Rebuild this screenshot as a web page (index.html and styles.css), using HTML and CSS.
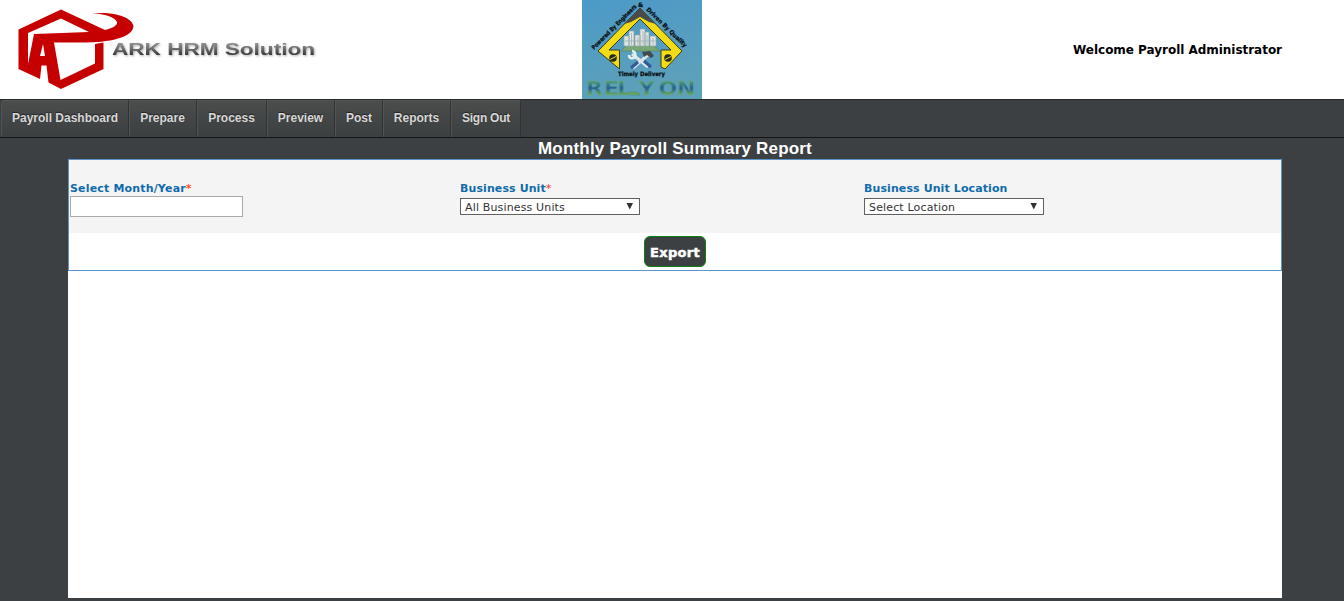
FILE: index.html
```html
<!DOCTYPE html>
<html lang="en">
<head>
<meta charset="utf-8">
<title>Monthly Payroll Summary Report</title>
<link rel="stylesheet" href="styles.css">
</head>
<body>
<header class="header">
  <svg class="brand" width="330" height="99" viewBox="0 0 330 99" role="img" aria-label="ARK HRM Solution">
    <defs>
      <linearGradient id="ink" gradientUnits="userSpaceOnUse" x1="0" y1="42" x2="0" y2="56">
        <stop offset="0" stop-color="#999"/><stop offset="0.45" stop-color="#707070"/><stop offset="1" stop-color="#303030"/>
      </linearGradient>
    </defs>
    <path fill="#c60000" fill-rule="evenodd" d="M18.500 29.500 61 9.500 105 30C113 28 118 25 117 22 115 17 105 14 92 13.500 113 11 132 17 133.500 26 133 36 115 42 87 42.500L54 42.500 60.500 80 95 63.500V44L103.500 42.500V69L61 89 48.500 82.500 46.500 65.500H41.500L40 79 18.500 69ZM28 33V64L34 34 89 32 61 18.500ZM43 44 40 56H45Z"/>
    <text class="brand-text" x="112" y="55" textLength="203" lengthAdjust="spacingAndGlyphs" fill="url(#ink)">ARK HRM Solution</text>
  </svg>
  <svg class="client" width="120" height="99" viewBox="0 0 120 99" role="img" aria-label="Relyon">
    <defs>
      <linearGradient id="sky" x1="0" y1="0" x2="0.3" y2="1">
        <stop offset="0" stop-color="#4c9ac8"/><stop offset="1" stop-color="#5da0b9"/>
      </linearGradient>
      <linearGradient id="word" gradientUnits="userSpaceOnUse" x1="0" y1="80" x2="0" y2="96">
        <stop offset="0" stop-color="#5aa667"/><stop offset="0.25" stop-color="#3d8681"/><stop offset="0.5" stop-color="#245e98"/><stop offset="0.7" stop-color="#43827f"/><stop offset="1" stop-color="#78b548"/>
      </linearGradient>
      <path id="arcLeft" d="M12 50 56 6"/>
      <path id="arcRight" d="M64 10 104 49"/>
    </defs>
    <rect width="120" height="99" fill="url(#sky)"/>
    <path d="M58 8 100 51 83 69 79 67V50H89L58 19 27 50H37.500V69L16 51Z" fill="#f3dc16" stroke="#363c20"/>
    <path d="M58 8 74 24 67 22 58 17 49 22 42 24Z" fill="#494c4a"/>
    <path d="M45 45H71L78 51H39Z" fill="#78a875" stroke="#59805f" stroke-width=".6"/>
    <path d="M42 36h5v10h-5zM47 31h5v15h-5zM53 35h5v11h-5zM58 29h5v17h-5zM63 32h4v14h-4zM68 36h6v10h-6z" fill="#dfe6e5" stroke="#91a3a5" stroke-width=".7"/>
    <path d="M49.500 33v12M56 37v8M61 31v14M65 35v10M71 38v7M43 41h30" stroke="#9cafb0" stroke-width=".8" fill="none"/>
    <path d="M50 54 66 67M67 54 51 68" stroke="#dce5ea" stroke-width="3" fill="none"/>
    <path d="M47 55C47 59 51 59 53 57 54 54 53 51 50 51" fill="none" stroke="#e6edef" stroke-width="2.500"/>
    <path d="M62 61 69 67M56 62 49 68" stroke="#315a99" stroke-width="3" fill="none"/>
    <path d="M60 52 68 51 72 56 69 58 65 55 62 57Z" fill="#43494d"/>
    <circle cx="31" cy="58" r="3.800" fill="#242a19"/><path d="M28 59.500 34 56.500" stroke="#d3bd36" stroke-width="1.200"/>
    <circle cx="86" cy="58" r="3.800" fill="#242a19"/><path d="M83 59.500 89 56.500" stroke="#d3bd36" stroke-width="1.200"/>
    <g class="motto">
      <text><textPath href="#arcLeft" textLength="61" lengthAdjust="spacingAndGlyphs">Powered By Engineers</textPath></text>
      <text x="56" y="6.500">&amp;</text>
      <text><textPath href="#arcRight" textLength="54" lengthAdjust="spacingAndGlyphs">Driven By Quality</textPath></text>
      <text x="36" y="76" textLength="47" lengthAdjust="spacingAndGlyphs">Timely Delivery</text>
    </g>
    <path d="M46 92H56L58 95H46Z" fill="#67a65a" stroke="#3f8277" stroke-width=".4"/>
    <text class="wordmark" transform="scale(1.1 1)" x="3.600 20 32 51.500 69.500 86.400" y="95" fill="url(#word)">RELYON</text>
  </svg>
  <div class="welcome">Welcome Payroll Administrator</div>
</header>
<nav class="menu">
  <a class="item dashboard">Payroll Dashboard</a>
  <a class="item prepare">Prepare</a>
  <a class="item process">Process</a>
  <a class="item preview">Preview</a>
  <a class="item post">Post</a>
  <a class="item reports">Reports</a>
  <a class="item signout">Sign Out</a>
</nav>
<main class="page">
  <h1 class="title">Monthly Payroll Summary Report</h1>
  <section class="sheet">
    <form class="panel">
      <div class="filters">
        <div class="field">
          <label class="label month">Select Month/Year<span class="star orange">*</span></label>
          <div class="input"></div>
        </div>
        <div class="field">
          <label class="label">Business Unit<span class="star">*</span></label>
          <div class="select">All Business Units<svg width="8" height="7" viewBox="0 0 8 7"><path d="M0.500 0H7L3.800 6.500Z"/></svg></div>
        </div>
        <div class="field">
          <label class="label">Business Unit Location</label>
          <div class="select">Select Location<svg width="8" height="7" viewBox="0 0 8 7"><path d="M0.500 0H7L3.800 6.500Z"/></svg></div>
        </div>
      </div>
      <div class="actions"><button class="export" type="button">Export</button></div>
    </form>
  </section>
</main>
</body>
</html>
```
FILE: styles.css
```css
* { box-sizing: border-box; }
body { margin: 0; height: 601px; overflow: hidden; background: #3c4042; font-family: "DejaVu Sans", sans-serif; }
.header { height: 99px; display: grid; grid-template-columns: 582px 120px 1fr; align-items: center; padding-right: 62px; background: #fff; }
.brand, .client { display: block; }
.brand-text { font: bold 16px "Liberation Sans", sans-serif; filter: drop-shadow(1px 1px 1px #aaa); }
.motto { font: bold 6px "DejaVu Sans", sans-serif; fill: #090e12; stroke: #090e12; stroke-width: .25px; }
.wordmark { font: bold 20px "DejaVu Sans", sans-serif; stroke: #62a58f; stroke-width: .5px; }
.welcome { justify-self: end; font-size: 12px; font-weight: bold; letter-spacing: -0.03px; color: #000; white-space: nowrap; }
.menu { height: 39px; display: flex; padding-left: 1px; border-top: 1px solid #272a2b; border-bottom: 1px solid #131516; background: #3c4042; }
.item { height: 37px; display: flex; align-items: center; justify-content: center; padding: 0 1px 2px 0; border-top: 1px solid #565857; border-left: 1px solid #515453; border-right: 1px solid #303334; background: linear-gradient(#4b4d4c, #3b3f41); color: #d8d8d8; font: bold 12px "Liberation Sans", sans-serif; text-shadow: 0 -1px 1px #222; }
.dashboard { width: 128px; padding-right: 0; border-radius: 4px 0 0 4px; }
.prepare, .preview, .reports { width: 68px; }
.process, .signout { width: 70px; }
.signout { padding-right: 0; letter-spacing: -0.25px; }
.post { width: 48px; padding-right: 0; }
.page { padding: 0 62px 0 68px; }
.title { height: 21px; margin: 0; padding-top: 1px; text-align: center; color: #fff; font: bold 17px/20px "Liberation Sans", sans-serif; letter-spacing: 0.19px; }
.sheet { height: 439px; background: #fff; }
.panel { height: 112px; border: 1px solid #5e95c8; }
.filters { height: 73px; display: grid; grid-template-columns: 390px 404px 1fr; padding: 21px 0 0 1px; background: #f4f4f4; }
.label { display: block; height: 15px; color: #116bab; font-size: 11px; font-weight: bold; line-height: 15px; letter-spacing: 0.1px; }
.month { letter-spacing: 0.17px; }
.star { font-weight: normal; color: #f22b3c; }
.orange { font-weight: bold; color: #ff5419; }
.input { width: 173px; height: 21px; border: 1px solid #a9a9a9; background: #fff; }
.select { width: 180px; height: 17px; margin-top: 2px; padding: 1px 5px 0 4px; display: flex; align-items: center; justify-content: space-between; border: 1px solid #606060; background: #fff; color: #333; font-size: 11px; line-height: 15px; letter-spacing: 0.15px; }
.select svg { margin-top: -2px; fill: #333; }
.actions { height: 37px; display: flex; justify-content: center; align-items: center; }
.export { width: 62px; height: 31px; padding: 2px 0 0; border: 1px solid #0b800d; border-radius: 6px; background: #3c4042; color: #fff; font: bold 13px "DejaVu Sans", sans-serif; letter-spacing: 0.3px; -webkit-text-stroke: 0.5px #fff; }
```
